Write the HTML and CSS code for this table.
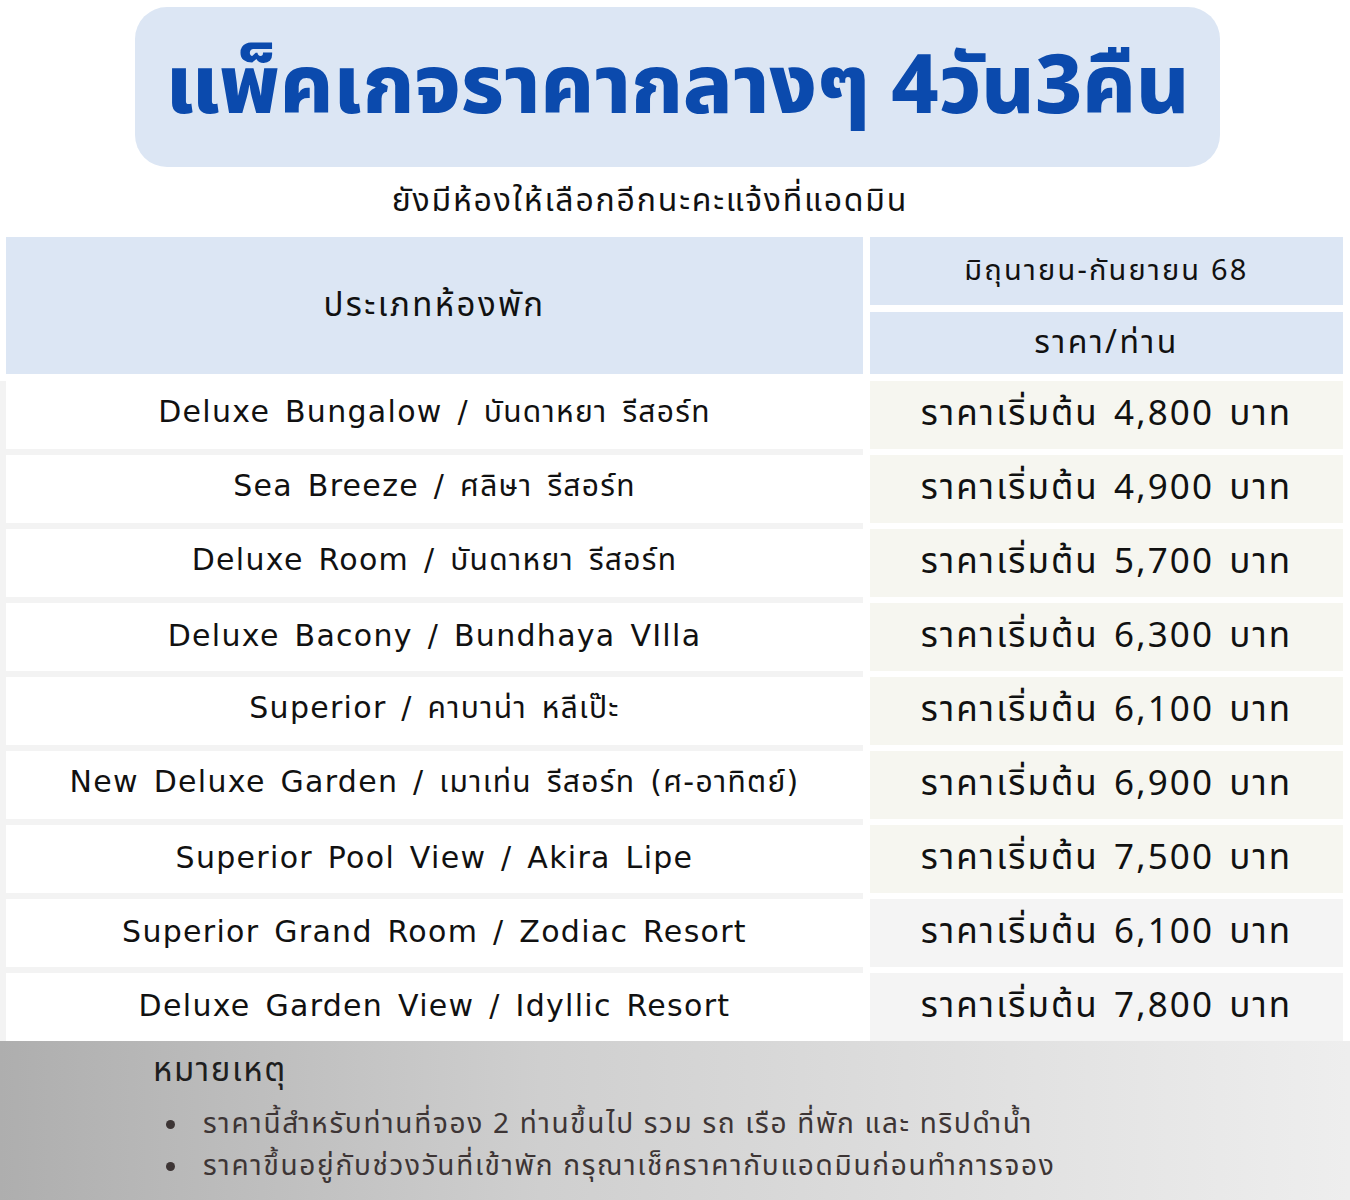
FILE: index.html
```html
<!DOCTYPE html>
<html lang="th">
<head>
<meta charset="utf-8">
<link rel="stylesheet" href="styles.css">
</head>
<body>
<div class="page">
  <header class="title-box"><h1 class="title">แพ็คเกจราคากลางๆ 4วัน3คืน</h1></header>
  <p class="subtitle">ยังมีห้องให้เลือกอีกนะคะแจ้งที่แอดมิน</p>
  <div class="table">
    <div class="head">
      <div class="head-left">ประเภทห้องพัก</div>
      <div class="head-right">
        <div class="head-cell head-top">มิถุนายน-กันยายน 68</div>
        <div class="head-cell head-bottom">ราคา/ท่าน</div>
      </div>
    </div>
    <div class="body">
      <div class="col-left">
        <div class="room">Deluxe Bungalow / บันดาหยา รีสอร์ท</div>
        <div class="room">Sea Breeze / ศลิษา รีสอร์ท</div>
        <div class="room">Deluxe Room / บันดาหยา รีสอร์ท</div>
        <div class="room">Deluxe Bacony / Bundhaya VIlla</div>
        <div class="room">Superior / คาบาน่า หลีเป๊ะ</div>
        <div class="room">New Deluxe Garden / เมาเท่น รีสอร์ท (ศ-อาทิตย์)</div>
        <div class="room">Superior Pool View / Akira Lipe</div>
        <div class="room">Superior Grand Room / Zodiac Resort</div>
        <div class="room">Deluxe Garden View / Idyllic Resort</div>
      </div>
      <div class="col-right">
        <div class="price">ราคาเริ่มต้น 4,800 บาท</div>
        <div class="price">ราคาเริ่มต้น 4,900 บาท</div>
        <div class="price">ราคาเริ่มต้น 5,700 บาท</div>
        <div class="price">ราคาเริ่มต้น 6,300 บาท</div>
        <div class="price">ราคาเริ่มต้น 6,100 บาท</div>
        <div class="price">ราคาเริ่มต้น 6,900 บาท</div>
        <div class="price">ราคาเริ่มต้น 7,500 บาท</div>
        <div class="price price-gray">ราคาเริ่มต้น 6,100 บาท</div>
        <div class="price price-gray">ราคาเริ่มต้น 7,800 บาท</div>
      </div>
    </div>
  </div>
  <section class="note">
    <h2 class="note-title">หมายเหตุ</h2>
    <ul class="note-list">
      <li>ราคานี้สำหรับท่านที่จอง 2 ท่านขึ้นไป รวม รถ เรือ ที่พัก และ ทริปดำน้ำ</li>
      <li>ราคาขึ้นอยู่กับช่วงวันที่เข้าพัก กรุณาเช็คราคากับแอดมินก่อนทำการจอง</li>
    </ul>
  </section>
</div>
</body>
</html>
```
FILE: styles.css
```css
* { box-sizing: border-box; margin: 0; padding: 0; }
html, body { background: #fff; }
body {
  width: 1350px;
  height: 1200px;
  overflow: hidden;
  font-family: "Noto Sans", "Noto Sans Thai", "Noto Sans Thai Looped", Kanit, Prompt, sans-serif;
  color: #111;
}
.page { display: flex; flex-direction: column; height: 1200px; }
.title-box {
  margin: 7px 130px 0 135px;
  height: 160px;
  background: #dce6f4;
  border-radius: 32px;
  display: flex;
  align-items: center;
  justify-content: center;
}
.title {
  font-size: 82px;
  font-weight: 800;
  color: #0b4aad;
  line-height: 1;
  letter-spacing: 0;
  padding-bottom: 12px;
}
.subtitle {
  text-align: center;
  font-size: 32px;
  letter-spacing: 1.8px;
  line-height: 36px;
  margin-top: 14px;
  height: 56px;
  padding-right: 50px;
}
.head { display: flex; height: 144px; }
.head-left {
  margin-left: 6px;
  width: 857px;
  height: 137px;
  background: #dce6f4;
  display: flex;
  align-items: center;
  justify-content: center;
  font-size: 33px;
  letter-spacing: 2.4px;
}
.head-right {
  margin-left: 7px;
  width: 473px;
  display: flex;
  flex-direction: column;
  gap: 7px;
}
.head-cell {
  background: #dce6f4;
  display: flex;
  align-items: center;
  justify-content: center;
}
.head-top { height: 68px; font-size: 29px; letter-spacing: 2.2px; }
.head-bottom { height: 62px; font-size: 32px; letter-spacing: 2.4px; }
.body { display: flex; }
.col-left {
  width: 863px;
  background: #f3f3f3;
  padding-left: 6px;
  display: flex;
  flex-direction: column;
  gap: 6px;
}
.room {
  height: 68px;
  background: #fff;
  display: flex;
  align-items: center;
  justify-content: center;
  font-family: "DejaVu Sans", "Noto Sans Thai", "Noto Sans", sans-serif;
  font-size: 30px;
  letter-spacing: 1.3px;
  word-spacing: 4px;
  padding-bottom: 4px;
}
.col-right {
  margin-left: 7px;
  width: 473px;
  display: flex;
  flex-direction: column;
  gap: 6px;
}
.price {
  height: 68px;
  background: #f6f6f0;
  display: flex;
  align-items: center;
  justify-content: center;
  font-size: 35px;
  letter-spacing: 2.1px;
  word-spacing: 4px;
  padding-bottom: 2px;
}
.price-gray { background: #f4f4f4; }
.note {
  flex: 1;
  background: linear-gradient(90deg, #aeaeae 0%, #cfcfcf 40%, #eeeeee 100%);
  padding: 8px 0 0 153px;
}
.note-title {
  font-size: 33px;
  font-weight: 400;
  color: #1e1e1e;
  line-height: 40px;
  letter-spacing: 1.6px;
}
.note-list {
  list-style: none;
  margin-top: 12px;
  color: #3d3535;
  font-size: 28px;
  line-height: 42px;
  letter-spacing: 1.7px;
}
.note-list li {
  display: flex;
  align-items: center;
}
.note-list li::before {
  content: "";
  width: 9px;
  height: 9px;
  border-radius: 50%;
  background: #3d3535;
  margin: 4px 28px 0 13px;
  flex: none;
}
```
